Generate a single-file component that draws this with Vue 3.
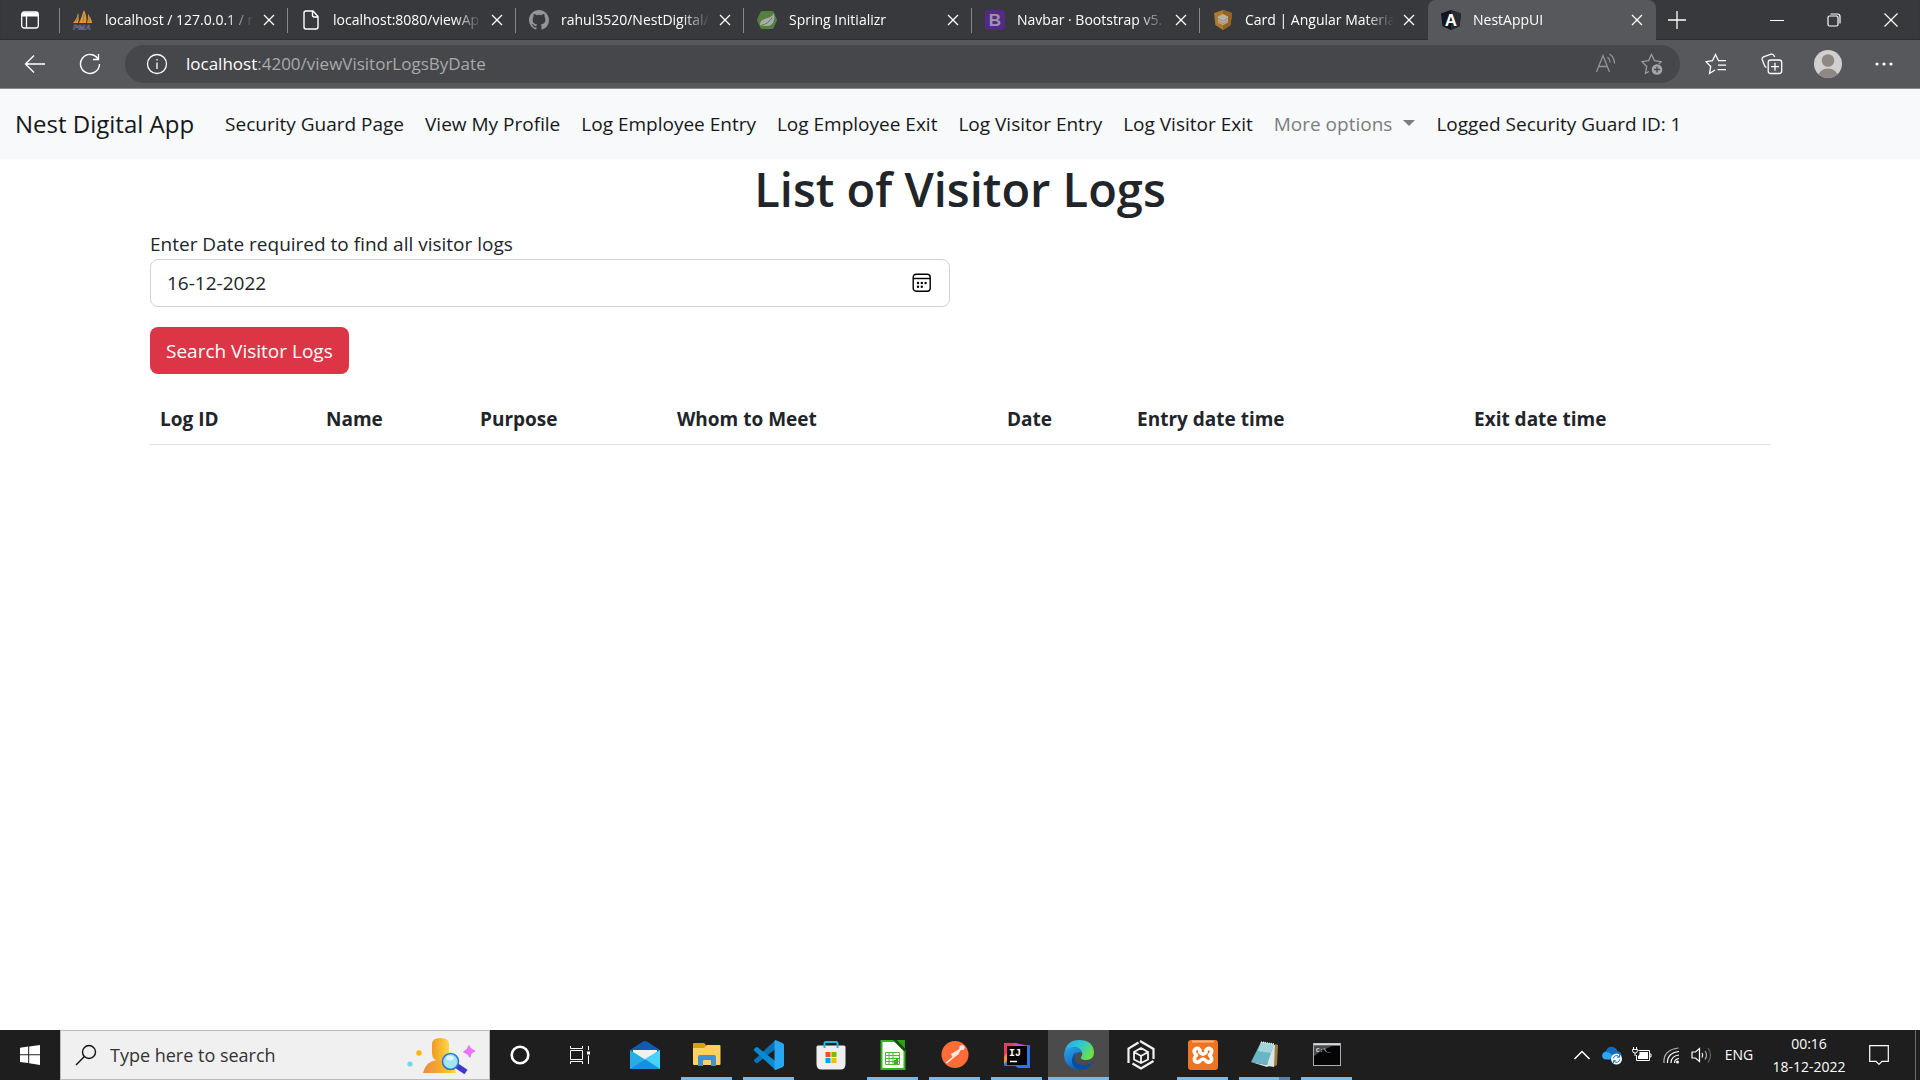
<script setup>
import { ref } from 'vue'

const tabs = [
  { icon: 'pma', title: 'localhost / 127.0.0.1 / r' },
  { icon: 'file', title: 'localhost:8080/viewAp' },
  { icon: 'github', title: 'rahul3520/NestDigital/' },
  { icon: 'spring', title: 'Spring Initializr' },
  { icon: 'bootstrap', title: 'Navbar · Bootstrap v5.' },
  { icon: 'material', title: 'Card | Angular Materia' },
  { icon: 'angular', title: 'NestAppUI', active: true },
]

const links = [
  'Security Guard Page',
  'View My Profile',
  'Log Employee Entry',
  'Log Employee Exit',
  'Log Visitor Entry',
  'Log Visitor Exit',
]

const columns = [
  { label: 'Log ID', width: 166 },
  { label: 'Name', width: 154 },
  { label: 'Purpose', width: 197 },
  { label: 'Whom to Meet', width: 330 },
  { label: 'Date', width: 130 },
  { label: 'Entry date time', width: 337 },
  { label: 'Exit date time', width: 306 },
]

const apps = [
  { icon: 'mail', label: 'Mail' },
  { icon: 'explorer', label: 'File Explorer', open: true },
  { icon: 'vscode', label: 'Visual Studio Code', open: true },
  { icon: 'store', label: 'Microsoft Store' },
  { icon: 'calc', label: 'LibreOffice Calc', open: true },
  { icon: 'postman', label: 'Postman', open: true },
  { icon: 'idea', label: 'IntelliJ IDEA', open: true },
  { icon: 'edge', label: 'Microsoft Edge', open: true, current: true },
  { icon: 'cube', label: 'Package viewer' },
  { icon: 'xampp', label: 'XAMPP', open: true },
  { icon: 'notepad', label: 'Notepad', open: true, stacked: true },
  { icon: 'cmd', label: 'Command Prompt', open: true },
]

const date = ref('16-12-2022')
const address = ref('localhost:4200/viewVisitorLogsByDate')
</script>

<template>
  <div class="screen">
    <header class="browser">
      <div class="tabstrip">
        <button class="tab-menu" aria-label="Tab actions">
          <svg width="20" height="20" viewBox="0 0 20 20" fill="none" stroke="#fff" stroke-width="1.3">
            <rect x="1.7" y="2" width="16.6" height="16" rx="2.5" />
            <path d="M2 4.5h16" stroke-width="4" />
            <path d="M6.5 6v12" />
          </svg>
        </button>
        <div class="tabs">
          <div v-for="tab in tabs" :key="tab.title" class="tab" :class="{ active: tab.active }">
            <svg class="favicon" width="20" height="20" viewBox="0 0 20 20" fill="none">
              <g v-if="tab.icon === 'pma'">
                <path d="M0 13C3 10 4 7 5 3c1 3 1 7 0 10zM6 13c2-4 3-8 5-13 2 4 3 9 2 13zM14 13c1-3 1-6 1-9 2 3 4 6 4 9z" fill="#e8962e" />
                <path d="M3 12L6 4M10 12l1-8M16 12V6" stroke="#8b6a35" stroke-width=".7" />
                <text x="0" y="19.5" font-family="Liberation Sans, sans-serif" font-weight="bold" font-style="italic" font-size="8" fill="#34345c" stroke="#8e8eb8" stroke-width=".4">PMA</text>
              </g>
              <path v-else-if="tab.icon === 'file'" d="M12 1H5a2 2 0 0 0-2 2v14a2 2 0 0 0 2 2h10a2 2 0 0 0 2-2V6.500zM11.500 1v4.500a1.500 1.500 0 0 0 1.500 1.500h4" stroke="#fff" stroke-width="1.400" />
              <path v-else-if="tab.icon === 'github'" transform="scale(1.25)" fill="#939496" d="M8 0C3.58 0 0 3.58 0 8c0 3.54 2.29 6.53 5.47 7.59.4.07.55-.17.55-.38 0-.19-.01-.82-.01-1.49-2.01.37-2.53-.49-2.69-.94-.09-.23-.48-.94-.82-1.13-.28-.15-.68-.52-.01-.53.63-.01 1.08.58 1.23.82.72 1.21 1.87.87 2.33.66.07-.52.28-.87.51-1.07-1.78-.2-3.64-.89-3.64-3.95 0-.87.31-1.59.82-2.15-.08-.2-.36-1.02.08-2.12 0 0 .67-.21 2.2.82a7.6 7.6 0 0 1 4 0c1.53-1.04 2.2-.82 2.2-.82.44 1.1.16 1.92.08 2.12.51.56.82 1.27.82 2.15 0 3.07-1.87 3.75-3.65 3.95.29.25.54.73.54 1.48 0 1.07-.01 1.93-.01 2.2 0 .21.15.46.55.38A8 8 0 0 0 16 8c0-4.42-3.58-8-8-8z" />
              <g v-else-if="tab.icon === 'spring'">
                <path d="M5 1h10q1 0 1.500 1l3.300 7q.4 1 0 2l-3.300 7q-.5 1-1.500 1H5q-1 0-1.500-1L.2 11q-.4-1 0-2l3.300-7Q4 1 5 1z" fill="#537f42" />
                <path d="M17 3c1 6 0 13-7 13-4 0-7 0-7-1 0-8 11-5 14-12z" fill="#a9aaab" />
                <path d="M4 15.500c5-1 9-4 11-8" stroke="#537f42" stroke-width="1" />
              </g>
              <g v-else-if="tab.icon === 'bootstrap'">
                <rect width="20" height="20" rx="3" fill="#532b86" />
                <text x="10" y="16" text-anchor="middle" font-family="Liberation Sans, sans-serif" font-weight="bold" font-size="17" fill="#9f93b0">B</text>
              </g>
              <g v-else-if="tab.icon === 'material'">
                <path d="M10 0l9 3-1.400 12L10 20 2.400 15 1 3z" fill="#b07a2c" />
                <path d="M10 0l9 3-1.400 12L10 20z" fill="#936426" />
                <path d="M10 4l5 2.500v6L10 15l-5-2.500v-6z" fill="#b9b2a6" />
                <path d="M5 8.500l5 2.500 5-2.500M5 11l5 2.500 5-2.500" stroke="#93826b" stroke-width=".8" />
              </g>
              <g v-else>
                <path d="M10 0l10 3.500-1.500 12.800L10 20l-8.500-3.700L0 3.500z" fill="#10151f" />
                <path d="M10 0l10 3.500-1.500 12.800L10 20z" fill="#252a35" />
                <text x="10" y="15.500" text-anchor="middle" font-family="Liberation Sans, sans-serif" font-weight="bold" font-size="17" fill="#fff">A</text>
              </g>
            </svg>
            <span class="tab-title">{{ tab.title }}</span>
            <button class="tab-close" aria-label="Close tab">
              <svg width="12" height="12" viewBox="0 0 12 12" stroke="#fff" stroke-width="1.300"><path d="M1 1l10 10M11 1L1 11" /></svg>
            </button>
          </div>
        </div>
        <button class="new-tab" aria-label="New tab">
          <svg width="18" height="18" viewBox="0 0 18 18" stroke="#fff" stroke-width="1.300"><path d="M9 0v18M0 9h18" /></svg>
        </button>
        <div class="window-buttons">
          <button aria-label="Minimize"><svg width="14" height="14" viewBox="0 0 14 14" stroke="#fff"><path d="M0 7.500h14" /></svg></button>
          <button aria-label="Restore">
            <svg width="14" height="14" viewBox="0 0 14 14" fill="none" stroke="#fff" stroke-width="1.200"><rect x="1" y="3" width="10" height="10" rx="1.500" /><path d="M3.500 1h7A2.500 2.500 0 0 1 13 3.500v7" /></svg>
          </button>
          <button aria-label="Close"><svg width="14" height="14" viewBox="0 0 14 14" stroke="#fff" stroke-width="1.200"><path d="M.5.5l13 13M13.500.5l-13 13" /></svg></button>
        </div>
      </div>

      <div class="toolbar">
        <button class="tool back" aria-label="Back">
          <svg width="22" height="20" viewBox="0 0 22 20" fill="none" stroke="#fff" stroke-width="1.300"><path d="M21 10H1.500M10 1.500L1.500 10l8.500 8.500" /></svg>
        </button>
        <button class="tool" aria-label="Refresh">
          <svg width="22" height="22" viewBox="0 0 22 22" fill="none" stroke="#fff" stroke-width="1.400"><path d="M20.500 11A9.500 9.500 0 1 1 18.800 5.500M19.500 1v5.500H14" /></svg>
        </button>
        <div class="address">
          <button class="site-info" aria-label="Site information">
            <svg width="22" height="22" viewBox="0 0 22 22" fill="none" stroke="#fff" stroke-width="1.300"><circle cx="11" cy="11" r="9.500" /><path d="M11 9.500V16M11 6v1.600" /></svg>
          </button>
          <label class="address-field">
            <span class="address-text" aria-hidden="true"><b>localhost</b>:4200/viewVisitorLogsByDate</span>
            <input v-model="address" type="text" aria-label="Address" />
          </label>
          <button class="address-action" aria-label="Read aloud">
            <svg width="22" height="22" viewBox="0 0 22 22" fill="none" stroke="#939497" stroke-width="1.300"><path d="M1.500 19L8 2.500 14.500 19M4 13.500h8M12.500 4q2.500 2 2.500 5.500M14.500 1q5 3.500 5 9.500" /></svg>
          </button>
          <button class="address-action" aria-label="Add to favorites">
            <svg width="22" height="22" viewBox="0 0 22 22" fill="none" stroke="#9d9ea0" stroke-width="1.300"><path d="M8 18.500L4.500 20.300 5.700 13.500 1 8.700l6.500-1L10.500 1.500l3 6.200 6.500 1-2 2.300" /><circle cx="16" cy="16.500" r="5.300" fill="#a5a6a8" stroke="none" /><path d="M16 13.500v6M13 16.500h6" stroke="#46474a" /></svg>
          </button>
        </div>
        <div class="tools">
          <button class="tool" aria-label="Favorites">
            <svg width="22" height="22" viewBox="0 0 22 22" fill="none" stroke="#fff" stroke-width="1.300"><path d="M10 17l-5.500 3.500 1.200-7L1 8.700l6.500-1L10.500 1.500l3 6.200H21M13 12.200h8M12.500 16.700H21" /></svg>
          </button>
          <button class="tool" aria-label="Collections">
            <svg width="22" height="22" viewBox="0 0 22 22" fill="none" stroke="#fff" stroke-width="1.300"><path d="M5.500 14.500Q4 14 3.500 12.500L1.200 6.500Q.8 4.500 2.500 3.800L10 1.200q2-.5 3 1.300l.6 1.500" /><rect x="7.200" y="7" width="13.500" height="13.500" rx="2.500" /><path d="M14 9.700v8M10 13.700h8" /></svg>
          </button>
          <button class="tool" aria-label="Profile">
            <svg width="28" height="28" viewBox="0 0 28 28"><defs><clipPath id="avatar"><circle cx="14" cy="14" r="14" /></clipPath></defs><g clip-path="url(#avatar)"><rect width="28" height="28" fill="#d2d0ce" /><circle cx="14" cy="10.500" r="6.300" fill="#8d8883" /><ellipse cx="14" cy="27" rx="10" ry="8.500" fill="#8d8883" /></g></svg>
          </button>
          <button class="tool" aria-label="Settings and more">
            <svg width="18" height="18" viewBox="0 0 18 18" fill="#fff"><circle cx="2" cy="9" r="1.600" /><circle cx="9" cy="9" r="1.600" /><circle cx="16" cy="9" r="1.600" /></svg>
          </button>
        </div>
      </div>
    </header>

    <nav class="navbar">
      <a class="brand" href="#">Nest Digital App</a>
      <a v-for="link in links" :key="link" class="nav-link" href="#">{{ link }}</a>
      <a class="nav-link muted" href="#">More options<span class="caret"></span></a>
      <a class="nav-link" href="#">Logged Security Guard ID: 1</a>
    </nav>

    <main class="page">
      <h1>List of Visitor Logs</h1>
      <div class="container">
        <div class="form">
          <div class="field">
            <label for="log-date">Enter Date required to find all visitor logs</label>
            <div class="date-box">
              <input id="log-date" v-model="date" type="text" />
              <button class="picker" aria-label="Show date picker">
                <svg width="20" height="20" viewBox="0 0 20 20" fill="none" stroke="#000" stroke-width="1.400"><rect x="1.200" y="1.200" width="17" height="17" rx="3" /><path d="M1 5.500h17.500" /><g fill="#000" stroke="none"><circle cx="6" cy="10" r="1.200" /><circle cx="9.800" cy="10" r="1.200" /><circle cx="13.600" cy="10" r="1.200" /><circle cx="6" cy="13.800" r="1.200" /><circle cx="9.800" cy="13.800" r="1.200" /></g></svg>
              </button>
            </div>
          </div>
          <button class="search">Search Visitor Logs</button>
        </div>
        <table>
          <colgroup>
            <col v-for="c in columns" :key="c.label" :style="{ width: c.width + 'px' }" />
          </colgroup>
          <thead>
            <tr><th v-for="c in columns" :key="c.label" scope="col">{{ c.label }}</th></tr>
          </thead>
        </table>
      </div>
    </main>

    <footer class="taskbar">
      <button class="sys" aria-label="Start">
        <svg width="20" height="20" viewBox="0 0 20 20" fill="#fff"><path d="M0 2.800L8.200 1.600V9.300H0zM9.200 1.500L20 0v9.300H9.200zM0 10.300h8.200v7.800L0 17zM9.200 10.300H20V20L9.200 18.300z" /></svg>
      </button>
      <label class="taskbar-search">
        <svg width="22" height="22" viewBox="0 0 22 22" fill="none" stroke="#111" stroke-width="1.400"><circle cx="14" cy="8" r="6.500" /><path d="M9.400 12.600L1 21" /></svg>
        <input type="text" placeholder="Type here to search" aria-label="Type here to search" />
        <svg width="68" height="38" viewBox="0 0 68 38">
          <defs>
            <linearGradient id="head" x1="0" y1="0" x2="1" y2="0"><stop offset="0" stop-color="#ee9a20" /><stop offset="1" stop-color="#ffd748" /></linearGradient>
            <linearGradient id="bust" x1="0" y1="0" x2="1" y2="0"><stop offset="0" stop-color="#e78b49" /><stop offset=".6" stop-color="#f9b126" /><stop offset="1" stop-color="#ffd941" /></linearGradient>
          </defs>
          <circle cx="12" cy="17" r="2.700" fill="#ffb400" /><circle cx="3" cy="28" r="2.600" fill="#6fdbe8" />
          <path d="M16 37q3-12 14-13h8q10 4 11 13z" fill="url(#bust)" />
          <path d="M25 8q0-6 8.500-6T42 8v9q0 8-8.500 8T25 17z" fill="url(#head)" />
          <path d="M50 30l9 6" stroke="#4038c7" stroke-width="5.500" />
          <circle cx="43.500" cy="25.500" r="8" fill="#a5e4f7" stroke="#2678d4" stroke-width="1.600" />
          <ellipse cx="43" cy="22" rx="3.500" ry="2.500" fill="#dcf6fc" />
          <path d="M62 10q1 4 6 5-5 1-5 6-2-4-6-5 4-2 5-6z" fill="#e877f7" stroke="#e877f7" stroke-width="1.500" stroke-linejoin="round" />
        </svg>
      </label>
      <button class="sys" aria-label="Cortana">
        <svg width="20" height="20" viewBox="0 0 20 20" fill="none" stroke="#fff" stroke-width="2.600"><circle cx="10" cy="10" r="8.300" /></svg>
      </button>
      <button class="sys" aria-label="Task view">
        <svg width="20" height="20" viewBox="0 0 20 20" fill="none" stroke="#fff" stroke-width="1"><path d="M.5 1v2.500h12V1M.5 19v-2.500h12V19M.5 5.500h12v9H.5zM18.500 1v4M18.500 10.500V19" /><path d="M17 6.500h3v3h-3z" fill="#fff" stroke="none" /></svg>
      </button>
      <div class="apps">
        <button v-for="app in apps" :key="app.icon" class="app" :class="{ open: app.open, current: app.current, stacked: app.stacked }" :aria-label="app.label">
          <svg width="30" height="30" viewBox="0 0 30 30" fill="none">
            <g v-if="app.icon === 'mail'">
              <path d="M0 10L13 1.500q2-1 4 0L30 10v5H0z" fill="#0f5cb0" />
              <path d="M3 10h24v6l-12 9L3 15z" fill="#f1f1f1" />
              <path d="M0 10l15 9.500L30 10v19H0z" fill="#27aee8" />
              <path d="M30 10v19L15 19z" fill="#49d2f7" /><path d="M0 29L15 19.500 30 29z" fill="#158fdf" />
            </g>
            <g v-else-if="app.icon === 'explorer'">
              <path d="M1 4q0-1 1-1h10l3 3v5H1z" fill="#dd9f08" />
              <path d="M1 8h11l3-3h12.500q1 0 1 1v18q0 1-1 1H2q-1 0-1-1z" fill="#ffd25f" />
              <path d="M6 26V17q0-2 2-2h14q2 0 2 2v9h-5v-5q0-1-1-1h-6q-1 0-1 1v5z" fill="#3d93da" />
            </g>
            <g v-else-if="app.icon === 'vscode'">
              <path d="M21.500 0L0 20q-.5.700 0 1.200l2 1.800q.7.500 1.500 0L22 8.500z" fill="#0b71b8" />
              <path d="M21.500 30L0 10.500q-.5-.8 0-1.500l2-1.700q.8-.4 1.500 0L22 21.500z" fill="#098ad2" />
              <path d="M21.500 0L28.500 3q1.500.8 1.500 2v20q0 1.400-1.500 2.200L21.500 30q-1.500-.2-1-1.500V1.500q0-1 1-1.500z" fill="#2aa7f3" />
            </g>
            <g v-else-if="app.icon === 'store'">
              <path d="M.5 7q0-1.500 1.500-1.500h26q1.500 0 1.500 1.500v17q0 5.500-5 5.500h-19q-5 0-5-5.500z" fill="#efefef" />
              <path d="M8.500 8V3.500q0-1.500 1.500-1.500h10q1.500 0 1.500 1.500V8" stroke="#28b1ef" stroke-width="2" />
              <path d="M9.500 12h5v5h-5z" fill="#f25022" /><path d="M15.500 12h5v5h-5z" fill="#7fba00" /><path d="M9.500 18h5v5h-5z" fill="#00a4ef" /><path d="M15.500 18h5v5h-5z" fill="#ffb900" />
            </g>
            <g v-else-if="app.icon === 'calc'">
              <path d="M3.500 1H17l9.500 9.500V29h-23z" fill="#fff" stroke="#36b41c" stroke-width="2" />
              <path d="M18.500 0H27v9z" fill="#2da015" /><path d="M15 0h3.500L27 8.500V12z" fill="#174e0b" />
              <path d="M7.500 12.500h14v12h-14zM7.500 15.500h14M7.500 18.500h14M7.500 21.500h14M11 12.500v12M15 12.500v12" stroke="#4fb83b" />
              <path d="M16 24v-4h2v-2h2v6z" fill="#36b41c" />
            </g>
            <g v-else-if="app.icon === 'postman'">
              <circle cx="15" cy="14.500" r="13.500" fill="#ff6c37" />
              <path d="M21.500 7.500l-4 6L6.500 23" stroke="#fff" stroke-width="1.500" /><path d="M20 8.500l-9 5.500 2 4 6-4z" fill="#f7e7df" /><circle cx="22" cy="7.500" r="2.600" fill="#f7e7df" />
            </g>
            <g v-else-if="app.icon === 'idea'">
              <path d="M2 3h12l3 2h11v23H16l-3-2H2z" fill="#2378e8" /><path d="M2 3h12l-3 12-9 5z" fill="#f8375f" /><path d="M2 17l4-5 1 7-5 5z" fill="#f29035" /><path d="M13 3l10 2-2 4-10-2z" fill="#ba4cf0" />
              <path d="M5 6h20v19H5z" fill="#000" />
              <text x="7" y="15.500" font-family="Liberation Mono, monospace" font-weight="bold" font-size="10" fill="#fff">IJ</text><path d="M8 21.500h7" stroke="#fff" stroke-width="1.500" />
            </g>
            <g v-else-if="app.icon === 'edge'">
              <defs>
                <linearGradient id="edge-top" x1="0" y1="0" x2="1" y2=".5"><stop offset="0" stop-color="#25a9e6" /><stop offset=".55" stop-color="#32c7cf" /><stop offset="1" stop-color="#6be04b" /></linearGradient>
                <linearGradient id="edge-left" x1="0" y1="0" x2=".5" y2="1"><stop offset="0" stop-color="#2ba5ea" /><stop offset="1" stop-color="#0c62bd" /></linearGradient>
              </defs>
              <path d="M.5 13.500Q2 0 15 0q14 0 15 12 0 8-8 8-6 0-5-3 2-2 1-5Q15 6 8 7.500 2 9 .5 13.500z" fill="url(#edge-top)" />
              <path d="M0 15Q1 7 9 7q8 0 9 6-5-2-7 2-4 8 8 15-3 .5-7-.4Q0 26 0 15z" fill="url(#edge-left)" />
              <path d="M12 12q-5 12 7 13 5 .5 9-3 1.500-1 0 1.500Q24 30 16 30 7 28 8 19q1-5 4-7z" fill="#0d4e9b" />
            </g>
            <g v-else-if="app.icon === 'cube'" stroke="#f2f2f2" stroke-width="2.200">
              <path d="M2.500 23V8.500L12.500 2.500M14 1l13.500 8v10M27.500 21L15 28.500l-8.500-5" />
              <path d="M15 8l7 4v7.500L15 23l-7-3.500V12zM8 12l7 4 7-4M15 16v7" stroke-width="1.800" />
            </g>
            <g v-else-if="app.icon === 'xampp'">
              <rect width="30" height="30" rx="3" fill="#ed7423" /><path d="M4 1.500h22" stroke="#f6b184" stroke-width="2" />
              <path d="M12 10Q10 7.500 7.500 9T7 13.500l1.500 1.700L7 17q-1.500 3 .5 4.500t4.500-.5q3-4 6 0 2.500 2 4.500.5T23 17l-1.500-1.800L23 13.500Q24.500 10.500 22.500 9T18 10v2.500q-3 3-6 0z" stroke="#fff" stroke-width="3.600" stroke-linejoin="round" />
            </g>
            <g v-else-if="app.icon === 'notepad'">
              <path d="M25 4l3 1-1 20-4 2z" fill="#a17b3e" /><path d="M11 2l14 3-1 22-6-1z" fill="#d8e4e5" />
              <path d="M11 2l13 2-7 21L1 22z" fill="#68b5c4" /><path d="M11 2l13 2-3 9-13-2z" fill="#a5d5dc" /><path d="M1 22l16 3 2-3v4l-2 1z" fill="#dce6e6" /><path d="M11 2l13 2" stroke="#e8efef" stroke-width="1.500" stroke-dasharray="1 1" />
            </g>
            <g v-else>
              <rect x="1.500" y="3.500" width="27" height="22" fill="#050505" stroke="#a8adb2" /><path d="M2 4.500h26" stroke="#d7dadd" stroke-width="2" /><path d="M2 6h18Q10 10 2 16z" fill="#47494b" />
              <text x="4" y="12" font-family="Liberation Mono, monospace" font-weight="bold" font-size="6" fill="#e2e2e2">C:\_</text>
            </g>
          </svg>
        </button>
      </div>
      <div class="tray">
        <button aria-label="Show hidden icons"><svg width="18" height="20" viewBox="0 0 18 20" fill="none" stroke="#fff" stroke-width="1.500"><path d="M1.500 14L9 6.500l7.500 7.500" /></svg></button>
        <button aria-label="OneDrive">
          <svg width="20" height="20" viewBox="0 0 20 20" fill="none"><path d="M4.500 14.500Q0 14.500 0 10.500 0 7 4 6q2-5 7-4 3 .5 4.500 4Q20 7 19.500 11l-3 3.500z" fill="#0f6cbf" /><path d="M2 14Q-1 11 1.500 8 6 5 10 10l-2 4.500z" fill="#2da8ed" /><circle cx="14.500" cy="14" r="5.500" fill="#fff" /><path d="M11.300 13.500a3.300 3.300 0 0 1 6-1.500M17.700 14.500a3.300 3.300 0 0 1-6 1.500M17.500 9.500v2.700H15M11.500 18.500v-2.700H14" stroke="#1778ca" /></svg>
        </button>
        <button aria-label="Battery">
          <svg width="20" height="20" viewBox="0 0 20 20" fill="none" stroke="#fff"><path d="M6.500 5.500h11v10h-13V10M17.500 9h1.500v3h-1.500" /><path d="M7.500 7H16v7H6v-3q2-1 1.500-4z" fill="#fff" stroke="none" /><path d="M1.500 2v3M4.500 2v3M.5 4.500h5v1q0 2.500-2.500 2.500T.5 5.500zM3 8v3" /></svg>
        </button>
        <button aria-label="Network">
          <svg width="20" height="20" viewBox="0 0 20 20" fill="none" stroke="#fff" stroke-width="1.200"><path d="M2 18Q1 5 16.500 3" stroke="#b5b5b5" /><path d="M5.500 18Q5 8 17 6.500M9 18q0-7 8-8M12.500 18q0-4 4.500-4.500" /><circle cx="15.500" cy="17" r="1.500" fill="#fff" stroke="none" /></svg>
        </button>
        <button aria-label="Volume">
          <svg width="22" height="20" viewBox="0 0 22 20" fill="none" stroke="#fff" stroke-width="1.200"><path d="M1 7h3.500L8.500 3.500v13L4.500 13H1z" /><path d="M11 8q1.500 2 0 4.500" /><path d="M14 6q3 4 0 8.500" stroke="#aaa" /><path d="M17 3q5 7 0 14.500" stroke="#666" /></svg>
        </button>
        <button class="language">ENG</button>
        <button class="clock"><span>00:16</span><span>18-12-2022</span></button>
        <button class="notifications" aria-label="Notifications"><svg width="20" height="20" viewBox="0 0 20 20" fill="none" stroke="#fff" stroke-width="1.200"><path d="M.7.7h18.600v15.600H13l-3 3-3-3H.7z" /></svg></button>
        <button class="desktop" aria-label="Show desktop"></button>
      </div>
    </footer>
  </div>
</template>

<style>
html,
body {
  margin: 0;
  background: #fff;
}
</style>

<style scoped>
.screen {
  display: flex;
  flex-direction: column;
  min-height: 100vh;
  font-family: "Open Sans", "Noto Sans", sans-serif;
  font-size: 19px;
  line-height: 30px;
  color: #212529;
}
* {
  box-sizing: border-box;
}
button {
  display: flex;
  align-items: center;
  justify-content: center;
  flex: none;
  padding: 0;
  border: 0;
  background: none;
  color: inherit;
  font: inherit;
}
svg {
  display: block;
  flex: none;
}
input {
  font: inherit;
  color: inherit;
  outline: 0;
}
a {
  color: inherit;
  text-decoration: none;
}

.browser {
  background: #57585c;
  border-bottom: 1px solid #8a8b8e;
  color: #fff;
}
.tabstrip {
  display: flex;
  height: 40px;
  background: #38393c;
  box-shadow: inset 0 -1px 1px #2e2f32;
}
.tab-menu {
  width: 60px;
}
.tabs {
  display: flex;
  flex: 0 1 1596px;
  min-width: 0;
}
.tab {
  position: relative;
  display: flex;
  flex: 1 1 0;
  align-items: center;
  min-width: 0;
  padding: 0 13px;
}
.tab::before {
  content: "";
  position: absolute;
  left: -1px;
  top: 8px;
  width: 1px;
  height: 25px;
  background: #87888a;
}
.tab.active {
  background: #57585c;
  border-radius: 8px 8px 0 0;
}
.tab.active::before {
  display: none;
}
.tab-title {
  flex: 1;
  min-width: 0;
  margin: 0 9px 0 12px;
  overflow: hidden;
  white-space: nowrap;
  font-size: 14px;
  line-height: 20px;
  mask-image: linear-gradient(to right, #000 calc(100% - 28px), transparent);
}
.tab-close {
  width: 12px;
}
.new-tab {
  width: 42px;
}
.window-buttons {
  display: flex;
  margin-left: auto;
  padding-right: 1px;
}
.window-buttons button {
  width: 57px;
}

.toolbar {
  display: flex;
  align-items: center;
  height: 48px;
}
.tool {
  width: 56px;
  height: 40px;
}
.toolbar > .tool {
  width: 55px;
}
.toolbar > .back {
  width: 70px;
  margin-right: -8px;
}
.address {
  display: flex;
  flex: 1;
  align-items: center;
  height: 38px;
  margin-left: 8px;
  padding: 0 5px 0 21px;
  border-radius: 19px;
  background: #46474a;
}
.address-field {
  position: relative;
  flex: 1;
  margin-left: 18px;
  font-size: 17px;
  line-height: 24px;
}
.address-text {
  color: #a9aaac;
}
.address-text b {
  color: #fff;
  font-weight: 400;
}
.address-field input {
  position: absolute;
  inset: 0;
  width: 100%;
  padding: 0;
  border: 0;
  background: none;
  color: transparent;
}
.address-action {
  width: 46px;
}
.tools {
  display: flex;
  padding: 0 8px;
}

.navbar {
  display: flex;
  align-items: center;
  gap: 1px;
  padding: 10px 15px;
  background: #f8f9fa;
  color: #16181a;
  white-space: nowrap;
}
.brand {
  margin-right: 20px;
  font-size: 24px;
}
.nav-link {
  padding: 10px;
}
.nav-link.muted {
  color: #7c7d7e;
}
.caret {
  display: inline-block;
  margin-left: 11px;
  vertical-align: 5px;
  border: 6px solid transparent;
  border-top-color: currentColor;
  border-bottom: 0;
}

.page {
  flex: 1;
}
h1 {
  margin: 0 0 10px;
  font-size: 47px;
  line-height: 60px;
  font-weight: 600;
  text-align: center;
}
.container {
  max-width: 1650px;
  margin: 0 auto;
  padding: 0 15px;
}
.form {
  display: flex;
  flex-direction: column;
  align-items: flex-start;
  gap: 20px;
  margin-bottom: 20px;
}
.field {
  width: calc(50% - 10px);
}
.field label {
  display: block;
}
.date-box {
  position: relative;
}
.date-box input {
  display: block;
  width: 100%;
  height: 48px;
  padding: 0 16px;
  border: 1px solid #ced4da;
  border-radius: 8px;
  background: #fff;
}
.picker {
  position: absolute;
  top: 14px;
  right: 18px;
}
.search {
  height: 47px;
  padding: 0 16px;
  border-radius: 8px;
  background: #dc3545;
  color: #fff;
}
table {
  width: 100%;
  table-layout: fixed;
  border-collapse: collapse;
}
th {
  padding: 10px;
  border-bottom: 1px solid #dee2e6;
  text-align: left;
  font-weight: 700;
  white-space: nowrap;
}

.taskbar {
  display: flex;
  height: 50px;
  background: #1e1e1e;
  color: #fff;
}
.sys {
  width: 60px;
}
.taskbar-search {
  display: flex;
  align-items: center;
  width: 430px;
  padding: 0 14px;
  border: 1px solid #bbb;
  background: #f0f0f0;
}
.taskbar-search input {
  flex: 1;
  min-width: 0;
  padding: 0 0 0 13px;
  border: 0;
  background: none;
  font-size: 18px;
}
.taskbar-search input::placeholder {
  color: #333;
  opacity: 1;
}
.apps {
  display: flex;
  gap: 1px;
  margin-left: 4px;
}
.app {
  position: relative;
  width: 61px;
}
.app.current {
  background: #4b4b4b;
}
.app.open::after {
  content: "";
  position: absolute;
  bottom: 0;
  left: 5px;
  right: 5px;
  height: 3px;
  background: #76b9ed;
}
.app.current::after {
  left: 0;
  right: 0;
}
.app.stacked::after {
  background: linear-gradient(to right, #76b9ed 40px, #5682a8 40px);
}
.tray {
  display: flex;
  margin-left: auto;
  font-size: 14px;
}
.tray button {
  width: 30px;
}
.tray .language {
  width: 44px;
}
.tray .clock {
  flex-direction: column;
  width: 96px;
  line-height: 23px;
}
.tray .notifications {
  width: 44px;
}
.tray .desktop {
  width: 5px;
  margin-left: 14px;
  border-left: 1px solid #6e6e6e;
}
</style>
